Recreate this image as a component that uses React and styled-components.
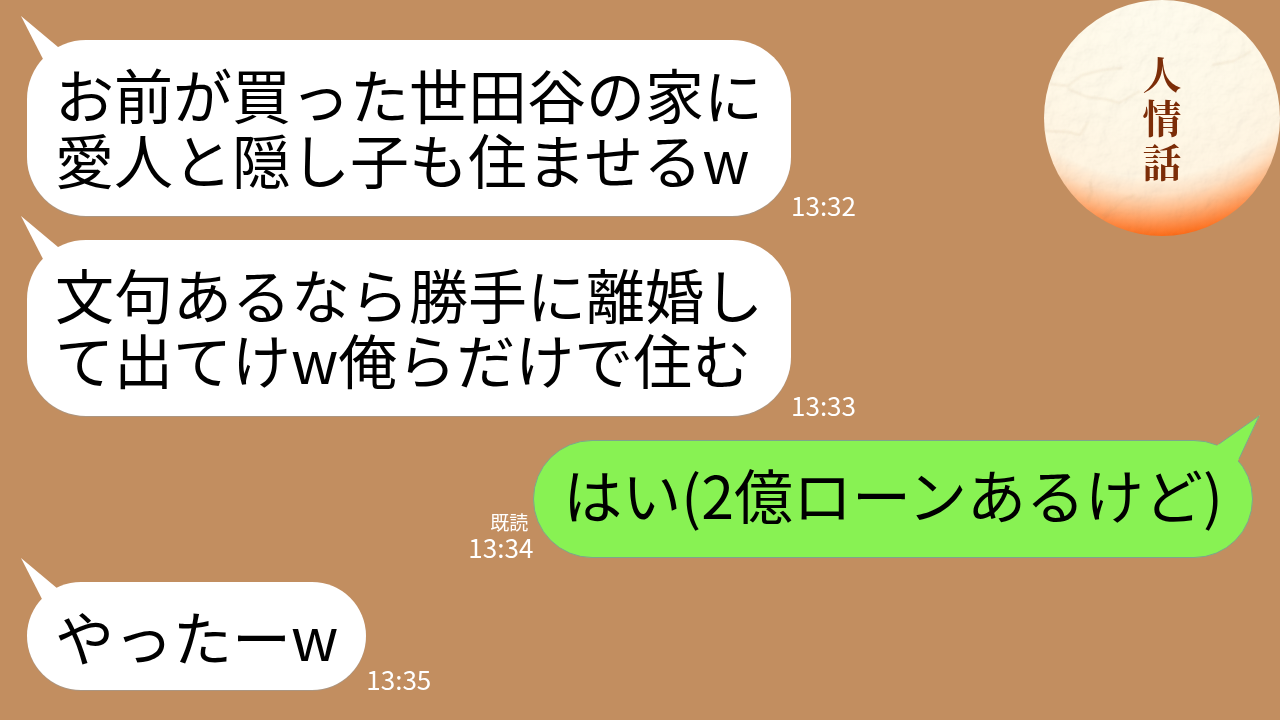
import React from "react";
import styled, { createGlobalStyle } from "styled-components";

const GlobalStyle = createGlobalStyle`
  *, *::before, *::after { box-sizing: border-box; }
  body {
    margin: 0;
    background: #c28e60;
    color: #000;
    font-family: "Noto Sans CJK JP", sans-serif;
  }
`;

const Page = styled.div`
  position: relative;
  min-height: 100vh;
  overflow: hidden;
`;

const Chat = styled.main`
  display: flex;
  flex-direction: column;
  gap: 24px;
  padding: 40px 27px 30px;
`;

const Row = styled.article`
  display: flex;
  align-items: flex-end;
  flex-direction: ${(p) => (p.$own ? "row-reverse" : "row")};
`;

const Bubble = styled.div`
  position: relative;
  min-height: ${(p) => p.$height};
  padding: ${(p) => (p.$own ? "20px 29px" : "21px 28px")};
  border: ${(p) => (p.$own ? "1px solid #7da68b" : "none")};
  border-radius: 59px;
  background: ${(p) => (p.$own ? "#88f253" : "#fff")};
  box-shadow: ${(p) => (p.$own ? "none" : "0 1px 0 #ab9682")};
`;

const Message = styled.p`
  margin: 0;
  font-size: 59px;
  line-height: 65px;
  white-space: pre;
`;

const TailShape = styled.svg`
  position: absolute;
  top: ${(p) => (p.$own ? "-26px" : "-24px")};
  ${(p) => (p.$own ? "right: -8px;" : "left: -6px;")}
  width: 56px;
  height: 60px;
`;

const Meta = styled.div`
  display: flex;
  flex-direction: column;
  align-items: flex-end;
  gap: 3px;
  color: #fff;
`;

const ReadMark = styled.span`
  padding-right: 5px;
  font-size: 19px;
  line-height: 22px;
`;

const Time = styled.time`
  font-size: 26px;
  line-height: 22px;
`;

const Badge = styled.aside`
  position: absolute;
  top: 0;
  right: 0;
  display: grid;
  place-items: center;
  width: 236px;
  height: 236px;
  border-radius: 50%;
  overflow: hidden;
`;

const Paper = styled.svg`
  grid-area: 1 / 1;
  width: 236px;
  height: 236px;
`;

const BadgeText = styled.h1`
  grid-area: 1 / 1;
  z-index: 1;
  width: 1em;
  margin: 0;
  padding-bottom: 5px;
  box-sizing: content-box;
  color: #7c2d08;
  font-family: "Noto Serif CJK JP", "Noto Sans CJK JP", serif;
  font-size: 39px;
  font-weight: 700;
  line-height: 44px;
  word-break: break-all;
`;

function Tail({ own }) {
  return own ? (
    <TailShape $own viewBox="0 0 56 60" aria-hidden="true">
      <path d="M56 0 15 29 5 37 27 58 35 44Z" fill="#88f253" />
      <path d="M15 29 55 1 35 44" fill="none" stroke="#7da68b" />
    </TailShape>
  ) : (
    <TailShape viewBox="0 0 56 60" aria-hidden="true">
      <path d="M0 0 37 31 50 42 30 58 22 43Z" fill="#fff" />
    </TailShape>
  );
}

function PaperTexture() {
  return (
    <Paper viewBox="0 0 236 236" aria-hidden="true">
      <defs>
        <radialGradient id="dye" gradientUnits="userSpaceOnUse" cx="106" cy="-6" r="244">
          <stop offset="0" stopColor="#fffdf2" />
          <stop offset="0.5" stopColor="#fffaec" />
          <stop offset="0.75" stopColor="#fff6e6" />
          <stop offset="0.82" stopColor="#ffe2c6" />
          <stop offset="0.88" stopColor="#ffbe8e" />
          <stop offset="0.95" stopColor="#fe8b45" />
          <stop offset="1" stopColor="#fc6812" />
        </radialGradient>
        <filter id="fibre" x="0" y="0" width="100%" height="100%">
          <feTurbulence type="fractalNoise" baseFrequency="0.05" numOctaves="5" seed="8" />
          <feDiffuseLighting surfaceScale="3" lightingColor="#fff8ea">
            <feDistantLight azimuth="225" elevation="66" />
          </feDiffuseLighting>
        </filter>
        <filter id="soft">
          <feGaussianBlur stdDeviation="0.8" />
        </filter>
      </defs>
      <rect width="236" height="236" fill="url(#dye)" />
      <rect
        width="236"
        height="236"
        filter="url(#fibre)"
        opacity="0.2"
        style={{ mixBlendMode: "multiply" }}
      />
      <g fill="none" stroke="#b58f66" strokeOpacity="0.28" filter="url(#soft)">
        <path d="M6 84 24 86 38 75 59 70 79 68" />
        <path d="M24 89 43 97 61 99 75 103 96 91" />
        <path d="M0 131 24 132 36 135 44 122" />
        <path d="M58 216 70 209 80 199 91 195" />
        <path d="M46 181 48 193 44 203" />
        <path d="M168 65 190 61 207 51" />
      </g>
    </Paper>
  );
}

const messages = [
  { text: "お前が買った世田谷の家に\n愛人と隠し子も住ませるw", time: "13:32", height: "176px" },
  { text: "文句あるなら勝手に離婚し\nて出てけw俺らだけで住む", time: "13:33", height: "176px" },
  { text: "はい(2億ローンあるけど)", time: "13:34", height: "118px", own: true, read: true },
  { text: "やったーw", time: "13:35", height: "108px" },
];

export default function App() {
  return (
    <Page lang="ja">
      <GlobalStyle />
      <Chat>
        {messages.map((m) => (
          <Row key={m.time} $own={m.own}>
            <Bubble $own={m.own} $height={m.height}>
              <Tail own={m.own} />
              <Message>{m.text}</Message>
            </Bubble>
            <Meta>
              {m.read && <ReadMark>既読</ReadMark>}
              <Time>{m.time}</Time>
            </Meta>
          </Row>
        ))}
      </Chat>
      <Badge>
        <PaperTexture />
        <BadgeText>人情話</BadgeText>
      </Badge>
    </Page>
  );
}
